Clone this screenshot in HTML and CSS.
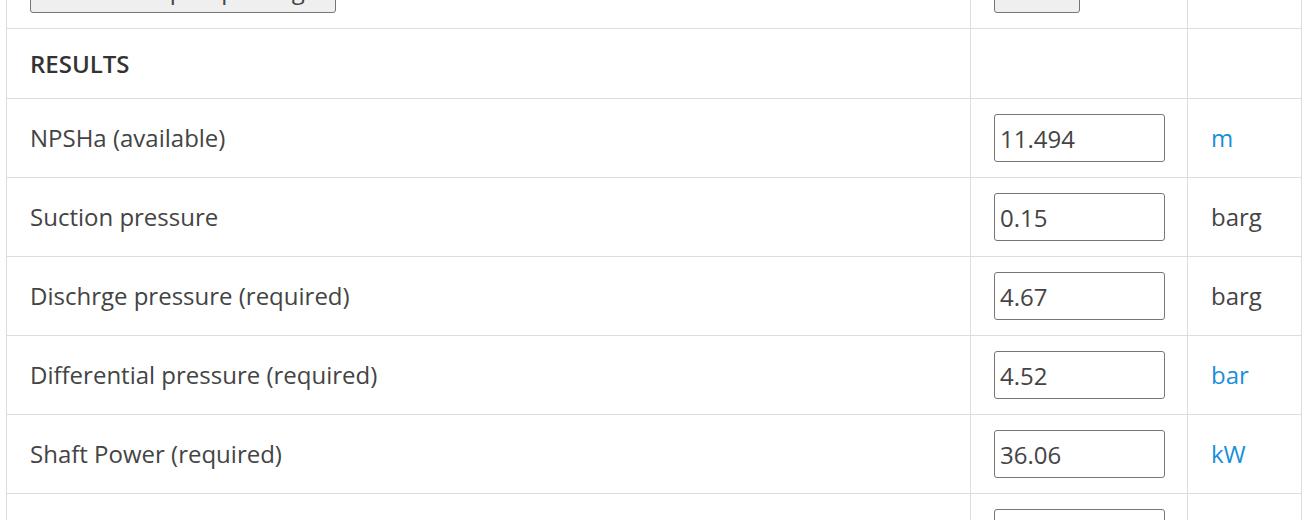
FILE: index.html
```html
<!DOCTYPE html>
<html lang="en">
<head>
  <meta charset="UTF-8">
  <title>Pump Sizing</title>
  <meta name="viewport" content="width=device-width, initial-scale=1.0">
  <link rel="stylesheet" href="styles.css">
</head>
<body>
  <div class="wrap">
    <table class="calc">
      <colgroup>
        <col class="c-label">
        <col class="c-value">
        <col class="c-unit">
      </colgroup>
      <tr>
        <td><button class="btn btn-main">Calculate pump sizing</button></td>
        <td><button class="btn btn-small">Reset</button></td>
        <td></td>
      </tr>
      <tr class="section">
        <td>RESULTS</td>
        <td></td>
        <td></td>
      </tr>
      <tr>
        <td>NPSHa (available)</td>
        <td><input type="text" value="11.494"></td>
        <td><a href="#" class="unit">m</a></td>
      </tr>
      <tr>
        <td>Suction pressure</td>
        <td><input type="text" value="0.15"></td>
        <td>barg</td>
      </tr>
      <tr>
        <td>Dischrge pressure (required)</td>
        <td><input type="text" value="4.67"></td>
        <td>barg</td>
      </tr>
      <tr>
        <td>Differential pressure (required)</td>
        <td><input type="text" value="4.52"></td>
        <td><a href="#" class="unit">bar</a></td>
      </tr>
      <tr>
        <td>Shaft Power (required)</td>
        <td><input type="text" value="36.06"></td>
        <td><a href="#" class="unit">kW</a></td>
      </tr>
      <tr>
        <td>Hydraulic power</td>
        <td><input type="text" value="27.05"></td>
        <td><a href="#" class="unit">kW</a></td>
      </tr>
    </table>
  </div>
</body>
</html>
```

FILE: styles.css
```css
* {
  box-sizing: border-box;
}

body {
  margin: 0;
  font-family: 'Open Sans', sans-serif;
  font-size: 24px;
  color: #444;
  background: #fff;
  overflow: hidden;
}

.wrap {
  padding-left: 6px;
  margin-top: -51px; /* page is scrolled down a little */
}

.calc {
  border-collapse: collapse;
  width: 1295px;
  table-layout: fixed;
}

.c-label { width: 964px; }
.c-value { width: 217px; }
.c-unit { width: 114px; }

.calc td {
  border: 1px solid #ddd;
  padding: 15px 23px;
  vertical-align: middle;
  line-height: 30px;
}

.section td {
  height: 70px;
  font-weight: 600;
  color: #333;
}

.calc input {
  width: 171px;
  height: 48px;
  font-family: 'Open Sans', sans-serif;
  font-size: 24px;
  color: #444;
  border: 1px solid #767676;
  border-radius: 3px;
  padding: 0 5px;
  display: block;
}

.btn {
  height: 48px;
  font-family: 'Open Sans', sans-serif;
  font-size: 24px;
  color: #444;
  background: #efefef;
  border: 1px solid #767676;
  border-radius: 3px;
  display: block;
}

.btn-main { width: 306px; }
.btn-small { width: 86px; }

.unit {
  color: #1a8fd9;
  text-decoration: none;
}
```
